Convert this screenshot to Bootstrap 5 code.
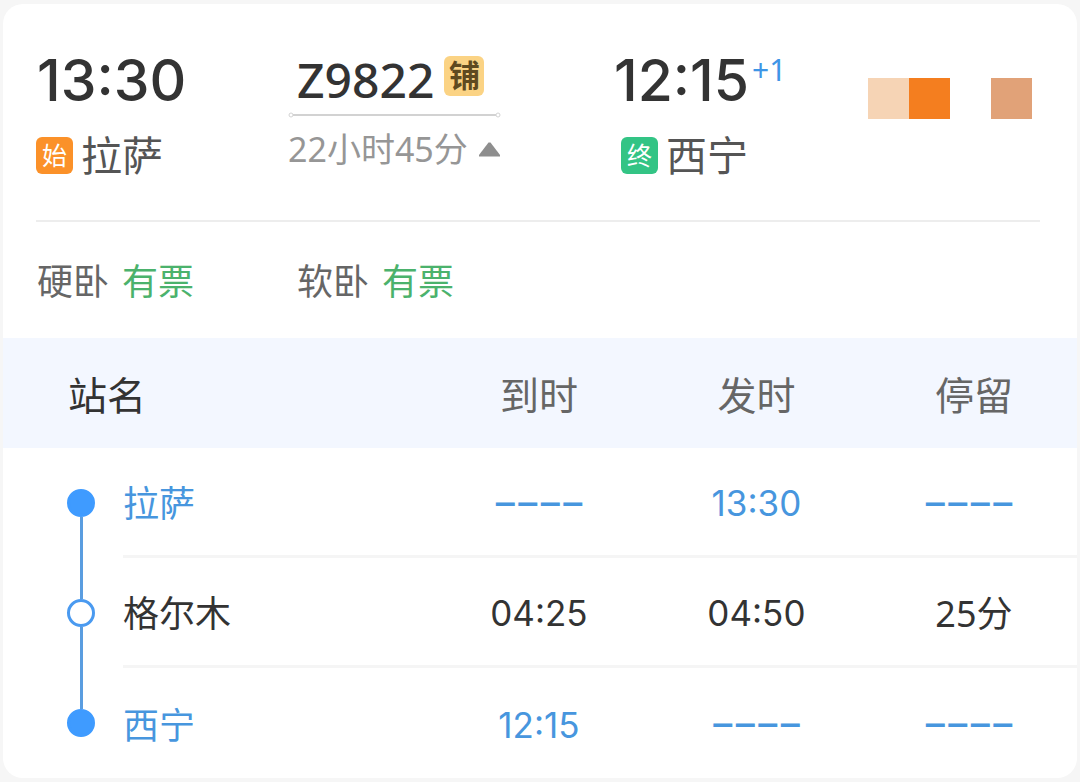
<!DOCTYPE html>
<html lang="zh-CN">
<head>
<meta charset="utf-8">
<meta name="viewport" content="width=device-width, initial-scale=1">
<title>Z9822 拉萨 – 西宁</title>
<link href="https://cdn.jsdelivr.net/npm/bootstrap@5.3.0/dist/css/bootstrap.min.css" rel="stylesheet">
<style>
body { background: #f6f6f6; color: #333; font-family: "Noto Sans", "Noto Sans CJK SC", sans-serif; padding: 4px 3px; }
.trip-card { border-radius: 20px; background: #fff; overflow: hidden; }
.summary { display: grid; grid-template-columns: 252fr 325fr 255fr 172fr; margin: 0 37px 0 33px; height: 218px; padding-top: 44px; border-bottom: 2px solid #ededed; }
.clock { font-family: Inter, "Noto Sans", sans-serif; font-size: 57px; font-weight: 500; line-height: 66px; height: 64px; padding-left: 1px; }
.place { font-size: 41px; line-height: 52px; color: #555; gap: 8px; margin-top: 17px; }
.tag { width: 37px; height: 37px; border-radius: 6px; font-size: 25px; line-height: 36px; color: #fff; text-align: center; }
.tag-start { background: #fb9129; }
.tag-end { background: #33c485; }
.tag-berth { width: 40px; height: 40px; line-height: 38px; margin-bottom: 8px; font-size: 31px; font-weight: 700; color: #5f4a20; background: #fbd384; }
.train-no { font-size: 48px; font-weight: 500; line-height: 64px; gap: 10px; padding-left: 9px; }
.plus-day { font-size: 30px; line-height: 44px; color: #3e95e6; padding-left: 3px; }
.route-line { display: block; width: 213px; height: 6px; }
.duration { font-size: 34px; line-height: 44px; color: #969696; gap: 11px; margin-top: 9px; }
.swatches { height: 41px; margin-top: 30px; }
.swatch { width: 41px; height: 41px; }
.seats { height: 116px; padding: 4px 34px 0; font-size: 36px; color: #666; gap: 103px; }
.seat { gap: 13px; }
.has-ticket { color: #4bb26c; }
.stops { table-layout: fixed; width: 100%; text-align: center; font-size: 36px; border-collapse: separate; border-spacing: 0; }
.stops th, .stops td { height: 110px; padding: 5px 0 0; font-weight: 400; }
.stops .rail-cell { padding: 0; }
.stops thead th { background: #f3f7ff; color: #666; font-size: 39px; }
.stops thead .station-head { text-align: left; padding-left: 65px; color: #333; }
.stops tbody th { text-align: left; }
.stops tbody tr:not(:last-child) > :not(.rail-cell) { border-bottom: 3px solid #f5f5f5; }
.col-rail { width: 120px; }
.col-side { width: 19.2%; }
.col-mid { width: 21.3%; }
.rail { height: 110px; width: 28px; margin-left: 64px; }
.rail i { width: 3px; background: #5a9de0; }
.rail b { width: 28px; height: 28px; border: 3px solid #4a9af0; border-radius: 50%; }
.rail .end-dot { background: #3f9bff; border-color: #3f9bff; }
.rail .blank { background: none; }
.stops .time { font-family: Inter, "Noto Sans", sans-serif; font-size: 35px; padding-top: 4px; }
.stops .terminal { color: #4796de; }
.stops .dashes { font-size: 45px; padding: 0 0 6px; line-height: 60px; }
.stops .dashes:last-child { padding-right: 10px; }
</style>
</head>
<body>
<main class="trip-card">
  <section class="summary">
    <div>
      <div class="clock">13:30</div>
      <div class="place d-flex align-items-center"><span class="tag tag-start">始</span>拉萨</div>
    </div>
    <div>
      <div class="train-no d-flex align-items-center">Z9822<span class="tag tag-berth">铺</span></div>
      <svg class="route-line" viewBox="0 0 213 6" fill="none" stroke="#d2d2d2"><path d="M5 3H208" stroke-width="2"/><circle cx="3" cy="3" r="2"/><circle cx="210" cy="3" r="2"/></svg>
      <button type="button" class="duration btn p-0 border-0 d-flex align-items-center">22小时45分<svg width="21" height="15" viewBox="0 0 21 15" fill="#8e8e8e"><path d="M9.500.5h2L21 13v1.500H0V13Z"/></svg></button>
    </div>
    <div>
      <div class="d-flex align-items-start"><span class="clock">12:15</span><span class="plus-day">+1</span></div>
      <div class="place d-flex align-items-center ps-2"><span class="tag tag-end">终</span>西宁</div>
    </div>
    <div class="swatches d-flex">
      <span class="swatch" style="background:#f6d4b5"></span><span class="swatch" style="background:#f47e1f"></span><span class="swatch ms-auto me-2" style="background:#e1a278"></span>
    </div>
  </section>
  <section class="seats d-flex align-items-center">
    <div class="seat d-flex"><span>硬卧</span><span class="has-ticket">有票</span></div>
    <div class="seat d-flex"><span>软卧</span><span class="has-ticket">有票</span></div>
  </section>
  <table class="stops">
    <colgroup><col class="col-rail"><col><col class="col-side"><col class="col-mid"><col class="col-side"></colgroup>
    <thead><tr><th scope="col" colspan="2" class="station-head">站名</th><th scope="col">到时</th><th scope="col">发时</th><th scope="col">停留</th></tr></thead>
    <tbody>
      <tr class="terminal">
        <td class="rail-cell"><div class="rail d-flex flex-column align-items-center"><i class="blank flex-fill"></i><b class="end-dot"></b><i class="flex-fill"></i></div></td>
        <th scope="row">拉萨</th><td class="dashes">––––</td><td class="time">13:30</td><td class="dashes">––––</td>
      </tr>
      <tr>
        <td class="rail-cell"><div class="rail d-flex flex-column align-items-center"><i class="flex-fill"></i><b></b><i class="flex-fill"></i></div></td>
        <th scope="row">格尔木</th><td class="time">04:25</td><td class="time">04:50</td><td>25分</td>
      </tr>
      <tr class="terminal">
        <td class="rail-cell"><div class="rail d-flex flex-column align-items-center"><i class="flex-fill"></i><b class="end-dot"></b><i class="blank flex-fill"></i></div></td>
        <th scope="row">西宁</th><td class="time">12:15</td><td class="dashes">––––</td><td class="dashes">––––</td>
      </tr>
    </tbody>
  </table>
</main>
<script src="https://cdn.jsdelivr.net/npm/bootstrap@5.3.0/dist/js/bootstrap.bundle.min.js"></script>
</body>
</html>
